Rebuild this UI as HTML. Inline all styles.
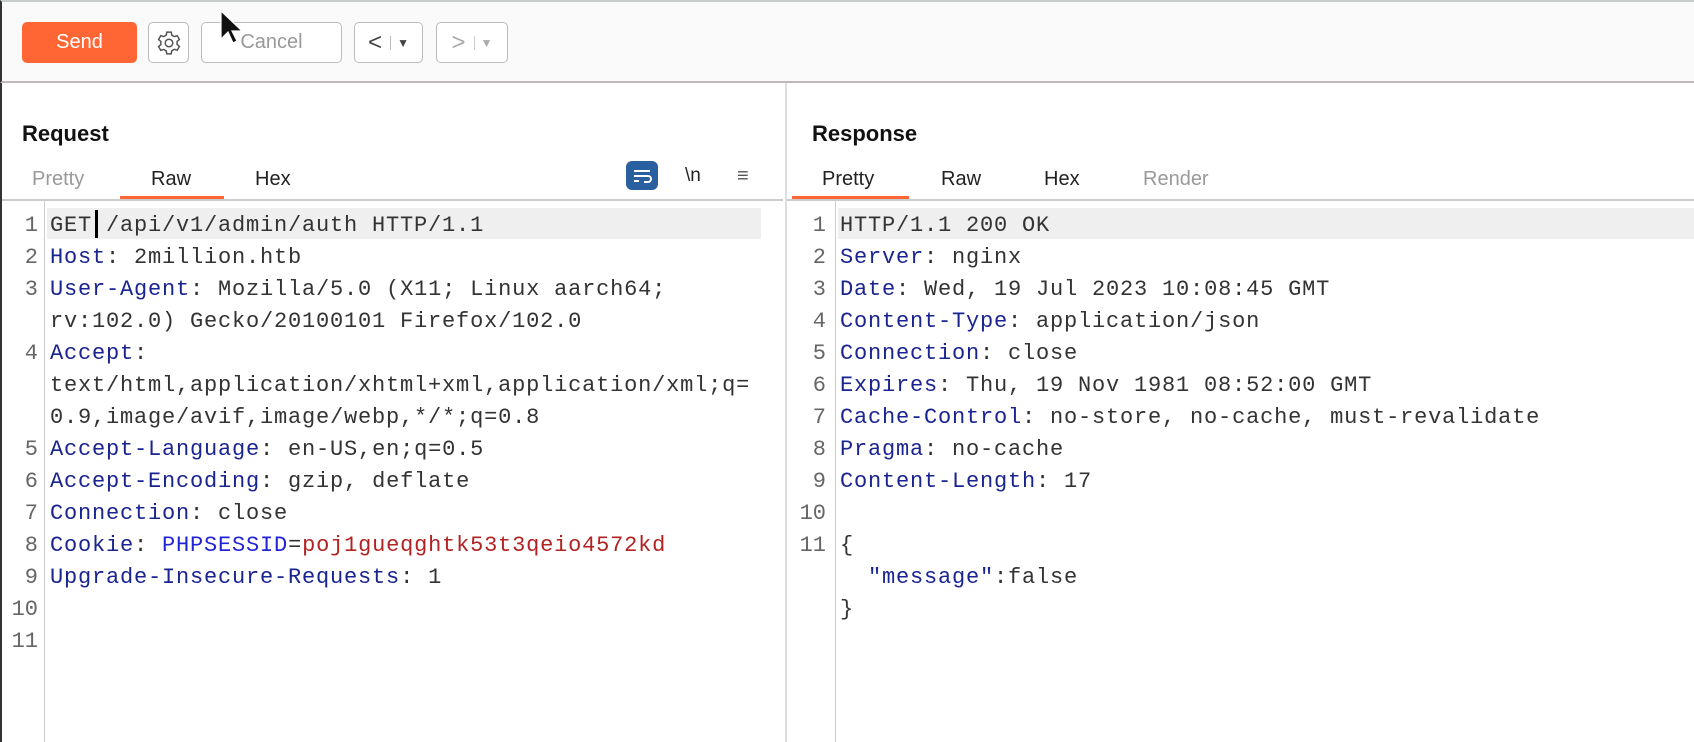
<!DOCTYPE html>
<html><head><meta charset="utf-8"><style>
*{margin:0;padding:0;box-sizing:border-box}
body{width:1694px;height:742px;background:#fff;position:relative;overflow:hidden;font-family:"Liberation Sans",sans-serif;color:#222}
.abs{position:absolute}
.tb{left:0;top:0;width:1694px;height:83px;background:#fafafa;border-top:2px solid #c8cccc;border-bottom:2px solid #bdb9b9;border-left:2px solid #333}
.btn{position:absolute;border:1.5px solid #bbb;border-radius:5px;background:#fff;display:flex;align-items:center;justify-content:center;font-size:20px;color:#888}
.send{background:#ff6633;border:none;color:#fff;font-size:20px}
.h{font-weight:bold;font-size:22px;color:#111}
.tab{font-size:20px;top:168px}
.code{font-family:"Liberation Mono",monospace;font-size:22px;letter-spacing:0.8px;color:#333;white-space:pre;line-height:32px}
.k{color:#1a2490}.c{color:#2323d6}.r{color:#b32222}
.ln{font-family:"Liberation Mono",monospace;font-size:22px;color:#666;text-align:right;width:34px;line-height:32px}
</style></head><body>
<div class="abs tb"></div>
<div class="btn send" style="left:22px;top:22px;width:115px;height:41px">Send</div>
<div class="btn" style="left:148px;top:22px;width:41px;height:41px"><svg width="26" height="26" viewBox="0 0 24 24" fill="none" stroke="#555" stroke-width="1.4"><circle cx="12" cy="12" r="3.5"/><path d="M10 2h4l.6 2.8 2.3 1.3 2.7-.9 2 3.5-2.1 1.9v2.7l2.1 1.9-2 3.5-2.7-.9-2.3 1.3L14 22h-4l-.6-2.8-2.3-1.3-2.7.9-2-3.5 2.1-1.9v-2.7L2.4 8.7l2-3.5 2.7.9 2.3-1.3z"/></svg></div>
<div class="btn" style="left:201px;top:22px;width:141px;height:41px;color:#999">Cancel</div>
<div class="btn" style="left:354px;top:22px;width:69px;height:41px;color:#444;font-size:24px">&lt;<span style="border-left:1px solid #bbb;margin-left:8px;padding-left:6px;font-size:12px">▼</span></div>
<div class="btn" style="left:436px;top:22px;width:72px;height:41px;color:#aaa;font-size:24px">&gt;<span style="border-left:1px solid #ccc;margin-left:8px;padding-left:6px;font-size:12px">▼</span></div>
<svg class="abs" style="left:220px;top:10px" width="24" height="36" viewBox="0 0 24 36"><path d="M1 1v28l7-7 5 11 4-2-5-10h10z" fill="#111" stroke="#fff" stroke-width="1.2"/></svg>

<div class="abs" style="left:0;top:83px;width:2px;height:659px;background:#333"></div>
<div class="abs" style="left:785px;top:83px;width:2px;height:659px;background:#ddd"></div>

<div class="abs h" style="left:22px;top:121px">Request</div>
<div class="abs tab" style="left:32px;color:#999">Pretty</div>
<div class="abs tab" style="left:151px">Raw</div>
<div class="abs tab" style="left:255px">Hex</div>
<div class="abs" style="left:120px;top:196px;width:104px;height:4px;background:#ff6633"></div>
<div class="abs" style="left:626px;top:161px;width:32px;height:29px;background:#2a5fa0;border-radius:6px"><svg width="32" height="29" viewBox="0 0 32 29"><path d="M8 10h16M8 15h14a3 3 0 010 6h-4M8 20h5" stroke="#fff" stroke-width="2" fill="none"/></svg></div>
<div class="abs" style="left:685px;top:165px;font-size:19px;color:#222">\n</div>
<div class="abs" style="left:737px;top:165px;font-size:20px;color:#555">≡</div>
<div class="abs" style="left:2px;top:199px;width:781px;height:2px;background:#ccc"></div>
<div class="abs" style="left:44px;top:201px;width:1px;height:541px;background:#ccc"></div>
<div class="abs" style="left:47px;top:208px;width:714px;height:31px;background:#efefef"></div>
<div class="abs" style="left:95px;top:210px;width:3px;height:28px;background:#000"></div>
<div class="abs ln" style="left:4px;top:210px">1<br>2<br>3<br><br>4<br><br><br>5<br>6<br>7<br>8<br>9<br>10<br>11</div>
<div class="abs code" style="left:50px;top:210px">GET /api/v1/admin/auth HTTP/1.1
<span class="k">Host</span>: 2million.htb
<span class="k">User-Agent</span>: Mozilla/5.0 (X11; Linux aarch64;
rv:102.0) Gecko/20100101 Firefox/102.0
<span class="k">Accept</span>:
text/html,application/xhtml+xml,application/xml;q=
0.9,image/avif,image/webp,*/*;q=0.8
<span class="k">Accept-Language</span>: en-US,en;q=0.5
<span class="k">Accept-Encoding</span>: gzip, deflate
<span class="k">Connection</span>: close
<span class="k">Cookie</span>: <span class="c">PHPSESSID</span>=<span class="r">poj1gueqghtk53t3qeio4572kd</span>
<span class="k">Upgrade-Insecure-Requests</span>: 1</div>

<div class="abs h" style="left:812px;top:121px">Response</div>
<div class="abs tab" style="left:822px">Pretty</div>
<div class="abs tab" style="left:941px">Raw</div>
<div class="abs tab" style="left:1044px">Hex</div>
<div class="abs tab" style="left:1143px;color:#999">Render</div>
<div class="abs" style="left:792px;top:196px;width:117px;height:4px;background:#ff6633"></div>
<div class="abs" style="left:787px;top:199px;width:907px;height:2px;background:#ccc"></div>
<div class="abs" style="left:835px;top:201px;width:1px;height:541px;background:#ccc"></div>
<div class="abs" style="left:838px;top:208px;width:856px;height:31px;background:#efefef"></div>
<div class="abs ln" style="left:792px;top:210px;width:34px">1<br>2<br>3<br>4<br>5<br>6<br>7<br>8<br>9<br>10<br>11</div>
<div class="abs code" style="left:840px;top:210px">HTTP/1.1 200 OK
<span class="k">Server</span>: nginx
<span class="k">Date</span>: Wed, 19 Jul 2023 10:08:45 GMT
<span class="k">Content-Type</span>: application/json
<span class="k">Connection</span>: close
<span class="k">Expires</span>: Thu, 19 Nov 1981 08:52:00 GMT
<span class="k">Cache-Control</span>: no-store, no-cache, must-revalidate
<span class="k">Pragma</span>: no-cache
<span class="k">Content-Length</span>: 17

{
  <span class="k">"message"</span>:false
}</div>
</body></html>
